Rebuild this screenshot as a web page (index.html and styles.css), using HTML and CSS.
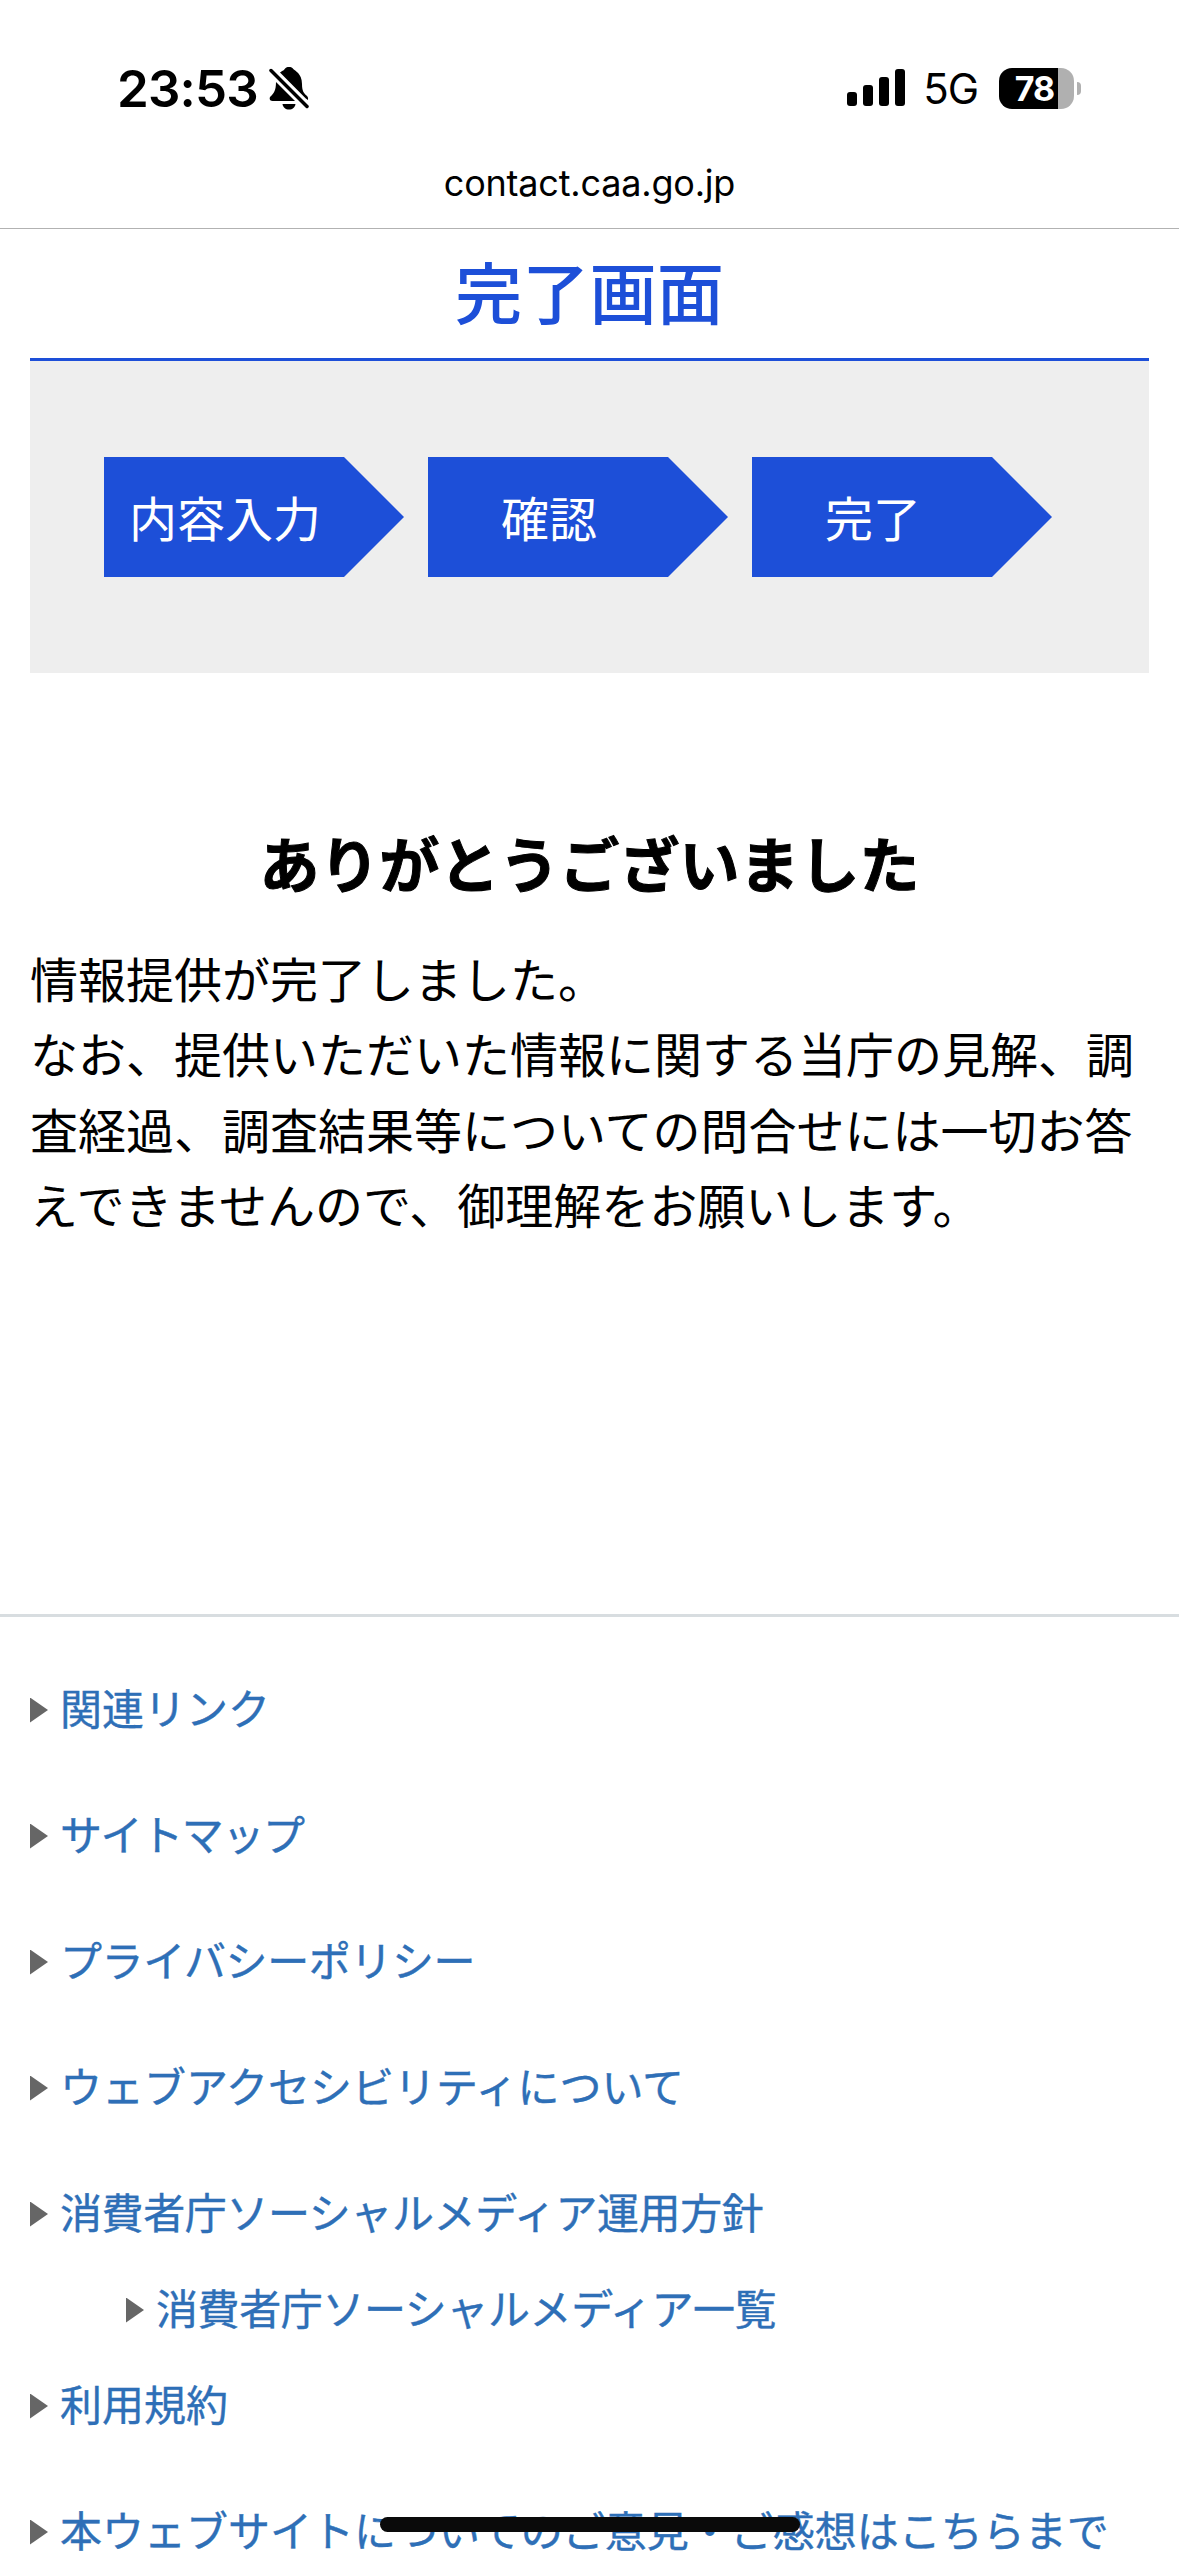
FILE: index.html
```
<!DOCTYPE html>
<html lang="ja">
<head>
  <meta charset="utf-8">
  <title>完了画面</title>
  <link rel="stylesheet" href="styles.css">
</head>
<body>
  <header class="browser-bar">
    <div class="status">
      <div class="status-left">
        <span class="time">23:53</span>
        <svg class="bell" width="40" height="43" viewBox="0 0 40 43">
          <path d="M11 5.5C13 4 14.500 3.600 15.500 2.200C16.500 0.600 18 0 20 0C22 0 23.500 0.600 24.500 2.200C25.500 3.600 33 6 33 17C33 24 35 26.500 37.500 28.500C39 30 39.300 31 39 33L36.800 31.500Z"/>
          <path d="M7 15L26 34H3.500C0.500 34 0 31 1.500 29.500C4.500 26.500 7 24 7 15Z"/>
          <path d="M13.500 37H26.500C26 40.500 23.500 42.500 20 42.500C16.500 42.500 14 40.500 13.500 37Z"/>
          <path class="slash" d="M2 3.500L38 39.500"/>
        </svg>
      </div>
      <div class="status-right">
        <svg width="58" height="38" viewBox="0 0 58 38">
          <rect x="0" y="23" width="10" height="14" rx="3"/>
          <rect x="16" y="16" width="10" height="21" rx="3"/>
          <rect x="32" y="8" width="10" height="29" rx="3"/>
          <rect x="48" y="0" width="10" height="37" rx="3"/>
        </svg>
        <span class="network">5G</span>
        <div class="battery">
          <div class="battery-body">78</div>
          <div class="battery-tip"></div>
        </div>
      </div>
    </div>
    <div class="url">contact.caa.go.jp</div>
  </header>

  <main>
    <h1>完了画面</h1>
    <ol class="steps">
      <li><span>内容入力</span></li>
      <li><span>確認</span></li>
      <li><span>完了</span></li>
    </ol>
    <h2>ありがとうございました</h2>
    <p>情報提供が完了しました。<br>なお、提供いただいた情報に関する当庁の見解、調査経過、調査結果等についての問合せには一切お答えできませんので、御理解をお願いします。</p>
  </main>

  <footer>
    <ul class="links">
      <li><a>関連リンク</a></li>
      <li><a class="tighter">サイトマップ</a></li>
      <li><a class="tight">プライバシーポリシー</a></li>
      <li><a>ウェブアクセシビリティについて</a></li>
      <li><a class="tight">消費者庁ソーシャルメディア運用方針</a></li>
      <li class="sub"><a class="tight">消費者庁ソーシャルメディア一覧</a></li>
      <li><a>利用規約</a></li>
      <li><a>本ウェブサイトについてのご意見・ご感想はこちらまで</a></li>
    </ul>
  </footer>
  <div class="home-indicator"></div>
</body>
</html>
```

FILE: styles.css
```
* {
  box-sizing: border-box;
}
body {
  margin: 0;
  height: 2556px;
  overflow: hidden;
  background: #fff;
  color: #000;
  font-family: "Noto Sans CJK JP", sans-serif;
}
.browser-bar {
  height: 229px;
  border-bottom: 1px solid #b2b2b2;
  font-family: Inter, sans-serif;
}
.status {
  display: flex;
  justify-content: space-between;
  align-items: center;
  height: 140px;
  padding: 36px 98px 0 117px;
}
.status-left,
.status-right {
  display: flex;
  align-items: center;
}
.time {
  font-size: 51px;
  font-weight: 600;
  letter-spacing: -0.8px;
}
.bell {
  margin-left: 11px;
}
.slash {
  stroke: #000;
  stroke-width: 3.5;
  stroke-linecap: round;
}
.network {
  margin-left: 18px;
  font-size: 42px;
  letter-spacing: -1px;
}
.battery {
  display: flex;
  align-items: center;
  gap: 3px;
  margin-left: 21px;
}
.battery-body {
  width: 75px;
  height: 41px;
  padding-right: 4px;
  border-radius: 13px;
  background: linear-gradient(to right, #000 59px, #b0b0b0 59px);
  color: #fff;
  font-size: 34px;
  font-weight: 700;
  line-height: 41px;
  text-align: center;
  letter-spacing: -1px;
}
.battery-tip {
  width: 4px;
  height: 13px;
  border-radius: 0 4px 4px 0;
  background: #b0b0b0;
}
.url {
  font-size: 36px;
  letter-spacing: -0.2px;
  line-height: 48px;
  padding-top: 19px;
  text-align: center;
}
main {
  height: 1385px;
  padding: 0 30px;
}
h1 {
  margin: 0;
  height: 132px;
  border-bottom: 3px solid #1d4fd8;
  color: #1d4fd8;
  font-size: 67.2px;
  font-weight: 500;
  line-height: 121px;
  text-align: center;
}
.steps {
  display: flex;
  gap: 24px;
  height: 312px;
  margin: 0;
  padding: 96px 74px;
  background: #eee;
  list-style: none;
}
.steps li {
  width: 300px;
  height: 120px;
  background: #1d4fd8;
  clip-path: polygon(0 0, 240px 0, 100% 50%, 240px 100%, 0 100%);
  color: #fff;
  font-size: 48px;
  line-height: 118px;
}
.steps span {
  display: block;
  width: 242px;
  text-align: center;
}
h2 {
  margin: 147px 0 0;
  font-size: 60px;
  font-weight: 700;
  line-height: 84px;
  text-align: center;
  -webkit-text-stroke: 1px #000;
}
p {
  margin: 36px -6px 0 0;
  font-size: 48px;
  line-height: 75.36px;
}
footer {
  border-top: 3px solid #d8dde0;
  padding: 30px 30px 0;
}
.links {
  margin: 0;
  padding: 0;
  list-style: none;
}
.links li {
  display: flex;
  align-items: center;
  height: 126px;
}
.links li::before {
  content: "";
  width: 18px;
  height: 25px;
  margin-right: 12px;
  background: #666;
  clip-path: polygon(0 0, 100% 50%, 0 100%);
}
.links .sub {
  height: 66px;
  margin-left: 96px;
}
.links a {
  color: #2e6fb7;
  font-size: 42px;
  line-height: 42px;
  padding-bottom: 6px;
  white-space: nowrap;
  -webkit-text-stroke: 0.4px #2e6fb7;
}
.links .tight {
  letter-spacing: -0.4px;
}
.links .tighter {
  letter-spacing: -1.4px;
}
.home-indicator {
  position: absolute;
  left: 380px;
  top: 2517px;
  width: 420px;
  height: 15px;
  border-radius: 8px;
  background: #0a0a0a;
}
```
